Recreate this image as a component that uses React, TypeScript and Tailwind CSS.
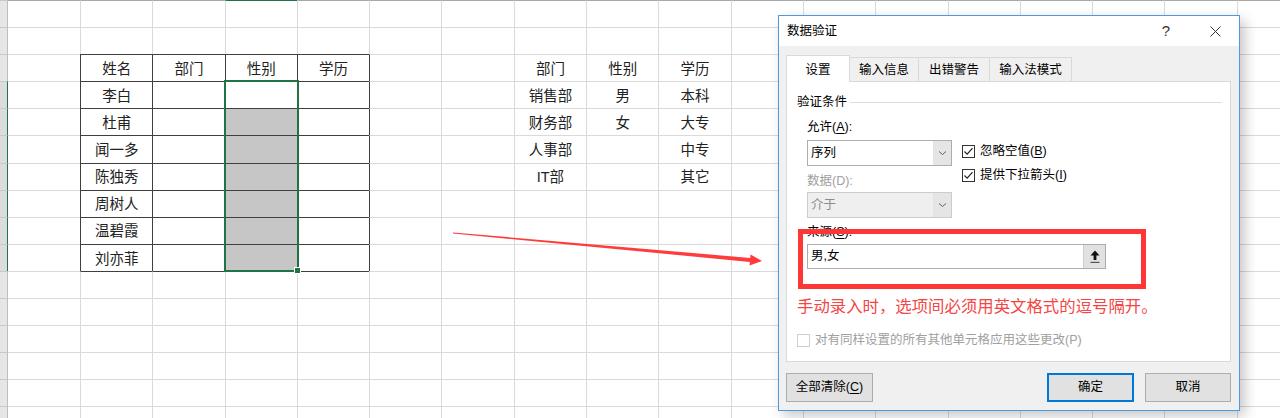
import React from "react";

const ROWS = 16;
const COLS = 18;

const CELLS: Record<string, string> = {
  "2-1": "姓名",
  "2-2": "部门",
  "2-3": "性别",
  "2-4": "学历",
  "3-1": "李白",
  "4-1": "杜甫",
  "5-1": "闻一多",
  "6-1": "陈独秀",
  "7-1": "周树人",
  "8-1": "温碧霞",
  "9-1": "刘亦菲",
  "2-7": "部门",
  "2-8": "性别",
  "2-9": "学历",
  "3-7": "销售部",
  "3-8": "男",
  "3-9": "本科",
  "4-7": "财务部",
  "4-8": "女",
  "4-9": "大专",
  "5-7": "人事部",
  "5-9": "中专",
  "6-7": "IT部",
  "6-9": "其它",
};

function inTable(r: number, c: number) {
  return r >= 2 && r <= 9 && c >= 1 && c <= 4;
}

function Cell({ r, c }: { r: number; c: number }) {
  const topDark = inTable(r, c) || inTable(r - 1, c);
  const leftDark = inTable(r, c) || inTable(r, c - 1);
  const gray = c === 3 && r >= 4 && r <= 9;

  let top = "border-t-[#dadada]";
  if (r === 0) top = c === 3 ? "border-t-[#217346]" : "border-t-[#a8a8a8]";
  else if (topDark) top = "border-t-[#3f3f3f]";

  let left = "border-l border-l-[#dadada]";
  if (c === 0) left = "border-l-0";
  else if (leftDark) left = "border-l border-l-[#3f3f3f]";

  return (
    <div
      className={`${c === 0 ? "w-[72px]" : "w-[72.3px]"} h-full shrink-0 border-t ${top} ${left} ${
        gray ? "bg-[#c6c6c6]" : "bg-white"
      } flex items-center justify-center pt-[3px] text-[14.5px] text-[#222]`}
    >
      {CELLS[`${r}-${c}`]}
    </div>
  );
}

function SheetRow({ r }: { r: number }) {
  const selected = r >= 3 && r <= 9;
  return (
    <div className="flex h-[27.1px]">
      <div
        className={`w-[8px] h-full shrink-0 border-t border-t-[#c8c8c8] border-r ${
          selected ? "border-r-[#217346] bg-[#dcdcdc]" : "border-r-[#bdbdbd] bg-[#e6e6e6]"
        }`}
      />
      {Array.from({ length: COLS }, (_, c) => (
        <Cell key={c} r={r} c={c} />
      ))}
    </div>
  );
}

function Chevron() {
  return (
    <svg width="9" height="6" viewBox="0 0 9 6">
      <polyline points="1,1.5 4.5,4.5 8,1.5" fill="none" stroke="#606060" strokeWidth="1" />
    </svg>
  );
}

function Select({ value, disabled }: { value: string; disabled?: boolean }) {
  return (
    <div
      className={`flex h-[26px] w-[145px] border ${
        disabled ? "border-[#cccccc] bg-[#efefef] text-[#8c8c8c]" : "border-[#adadad] bg-white text-black"
      }`}
    >
      <div className="flex-1 flex items-center pl-[3px]">{value}</div>
      <div className="w-[18px] flex items-center justify-center bg-[#e5e5e5]">
        <Chevron />
      </div>
    </div>
  );
}

function CheckBox({ checked, disabled }: { checked?: boolean; disabled?: boolean }) {
  return (
    <div
      className={`w-[13px] h-[13px] shrink-0 border bg-white flex items-center justify-center ${
        disabled ? "border-[#cfcfcf]" : "border-[#333333]"
      }`}
    >
      {checked && (
        <svg width="11" height="11" viewBox="0 0 11 11">
          <polyline points="1.5,5.5 4.2,8.2 9.5,2.2" fill="none" stroke="#222" strokeWidth="1.2" />
        </svg>
      )}
    </div>
  );
}

function Key({ k }: { k: string }) {
  return <span className="underline underline-offset-2">{k}</span>;
}

function DataValidationDialog() {
  return (
    <div className="absolute left-[778px] top-[15px] w-[462px] h-[396px] border border-[#4c9ae0] bg-[#f0f0f0] shadow-[5px_5px_12px_rgba(0,0,0,0.22)] text-[12.5px] text-black">
      <div className="h-[30px] bg-white flex items-center pl-[8px] pr-[9px]">
        <span>数据验证</span>
        <div className="ml-auto flex items-center gap-[19px]">
          <span className="w-[30px] text-center text-[15px] text-[#333]">?</span>
          <span className="w-[30px] flex justify-center">
            <svg width="11" height="11" viewBox="0 0 11 11">
              <path d="M0.5 0.5 L10.5 10.5 M10.5 0.5 L0.5 10.5" stroke="#333" strokeWidth="1" />
            </svg>
          </span>
        </div>
      </div>

      <div className="pl-[7px] pr-[8px] pt-[9px]">
        <div className="flex items-end h-[27px]">
          <div className="relative z-10 w-[64px] h-[27px] bg-white border border-b-0 border-[#d9d9d9] flex items-center justify-center pt-[2px]">
            设置
          </div>
          <div className="w-[69px] h-[25px] border border-l-0 border-b-0 border-[#d9d9d9] flex items-center justify-center">
            输入信息
          </div>
          <div className="w-[71px] h-[25px] border border-l-0 border-b-0 border-[#d9d9d9] flex items-center justify-center">
            出错警告
          </div>
          <div className="w-[82px] h-[25px] border border-l-0 border-b-0 border-[#d9d9d9] flex items-center justify-center">
            输入法模式
          </div>
        </div>

        <div className="-mt-px h-[281px] bg-white border border-[#d9d9d9] pl-[10px] pr-[8px]">
          <div className="mt-[12px] flex items-center h-[16px]">
            <span>验证条件</span>
            <div className="ml-[3px] flex-1 h-px bg-[#dcdcdc]" />
          </div>

          <div className="pl-[10px]">
            <div className="mt-[9px] flex">
              <div className="w-[145px]">
                <div className="h-[16px] leading-[16px]">
                  允许(<Key k="A" />):
                </div>
                <div className="mt-[5px]">
                  <Select value="序列" />
                </div>
                <div className="mt-[7px] h-[16px] leading-[16px] text-[#a0a0a0]">数据(D):</div>
                <div className="mt-[3px]">
                  <Select value="介于" disabled />
                </div>
                <div className="mt-[6px] h-[16px] leading-[16px]">
                  来源(<Key k="S" />):
                </div>
              </div>
              <div className="ml-[10px] pt-[25px]">
                <div className="flex items-center gap-[5px] h-[15px]">
                  <CheckBox checked />
                  <span>
                    忽略空值(<Key k="B" />)
                  </span>
                </div>
                <div className="mt-[9px] flex items-center gap-[5px] h-[15px]">
                  <CheckBox checked />
                  <span>
                    提供下拉箭头(<Key k="I" />)
                  </span>
                </div>
              </div>
            </div>

            <div className="mt-[4px] w-[299px] h-[25px] border border-[#adadad] bg-white flex">
              <div className="flex-1 flex items-center pl-[3px]">男,女</div>
              <div className="w-[22px] bg-[#e1e1e1] border-l border-[#cfcfcf] flex items-center justify-center">
                <svg width="10" height="14" viewBox="0 0 10 14">
                  <polygon points="5,0.5 9.5,5.5 0.5,5.5" fill="#111" />
                  <rect x="3.6" y="5" width="2.8" height="5" fill="#111" />
                  <rect x="0.5" y="11.8" width="9" height="1.2" fill="#555" />
                </svg>
              </div>
            </div>
          </div>

          <div className="mt-[26px] h-[22px] leading-[22px] text-[16.4px] text-[#f44646] whitespace-nowrap">
            手动录入时，选项间必须用英文格式的逗号隔开。
          </div>

          <div className="mt-[16px] flex items-center gap-[5px] h-[15px] text-[#a0a0a0]">
            <CheckBox disabled />
            <span>对有同样设置的所有其他单元格应用这些更改(P)</span>
          </div>
        </div>

        <div className="mt-[11px] flex">
          <button className="w-[87px] h-[29px] bg-[#e1e1e1] border border-[#adadad]">
            全部清除(<Key k="C" />)
          </button>
          <button className="ml-auto w-[87px] h-[29px] bg-[#e1e1e1] border border-[#0078d7] shadow-[inset_0_0_0_1px_#0078d7]">
            确定
          </button>
          <button className="ml-[11px] w-[86px] h-[29px] bg-[#e1e1e1] border border-[#adadad]">取消</button>
        </div>
      </div>

      <div className="absolute left-[19px] top-[213px] w-[348px] h-[60px] border-[5px] border-[#ff3636]" />
    </div>
  );
}

export default function App() {
  return (
    <div className="relative w-[1280px] h-[418px] overflow-hidden bg-white font-[family-name:'Liberation_Sans','Noto_Sans_CJK_SC',sans-serif]">
      <div className="flex flex-col">
        {Array.from({ length: ROWS }, (_, r) => (
          <SheetRow key={r} r={r} />
        ))}
      </div>

      <div className="absolute left-[224px] top-[80px] w-[75px] h-[192px] border-2 border-[#217346]" />
      <div className="absolute left-[294px] top-[267px] w-[7px] h-[7px] bg-[#217346] border border-white" />

      <svg className="absolute inset-0 pointer-events-none" width="1280" height="418" viewBox="0 0 1280 418">
        <polygon
          points="453.05,232.5 750.23,257.93 750.55,254.44 762,261 749.55,265.4 749.87,261.91 452.95,233.5"
          fill="#ff3b3b"
        />
      </svg>

      <DataValidationDialog />
    </div>
  );
}
